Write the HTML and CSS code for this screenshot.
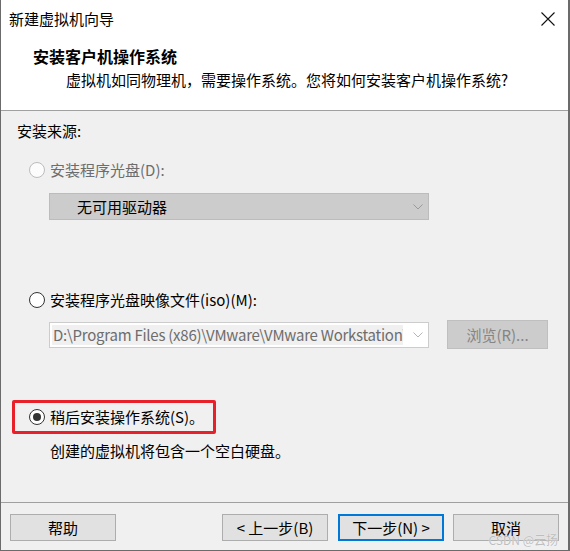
FILE: index.html
```html
<!DOCTYPE html>
<html lang="zh-CN">
<head>
<meta charset="utf-8">
<title>新建虚拟机向导</title>
<link rel="stylesheet" href="styles.css">
</head>
<body>
<div class="window">
  <div class="header">
    <div class="titlebar">
      <span class="title">新建虚拟机向导</span>
      <svg class="close" width="14" height="14" viewBox="0 0 14 14"><path d="M0.5 0.5 L13.5 13.5 M13.5 0.5 L0.5 13.5" stroke="#111" stroke-width="1.1" fill="none"/></svg>
    </div>
    <div class="heading">安装客户机操作系统</div>
    <div class="subtitle">虚拟机如同物理机，需要操作系统。您将如何安装客户机操作系统?</div>
  </div>
  <div class="body">
    <div class="group-label">安装来源:</div>
    <div class="radio-row disabled">
      <span class="radio radio-disabled"></span>
      <span>安装程序光盘(D):</span>
    </div>
    <div class="combo combo-drive">
      <span class="combo-text">无可用驱动器</span>
      <svg class="chev" width="10" height="6" viewBox="0 0 10 6"><path d="M0.5 0.5 L5 5 L9.5 0.5" stroke="#9a9a9a" fill="none"/></svg>
    </div>
    <div class="radio-row row-iso">
      <span class="radio"></span>
      <span>安装程序光盘映像文件(iso)(M):</span>
    </div>
    <div class="iso-row">
      <div class="combo combo-iso">
        <span class="edit">D:\Program Files (x86)\VMware\VMware Workstation\</span>
        <svg class="chev" width="10" height="6" viewBox="0 0 10 6"><path d="M0.5 0.5 L5 5 L9.5 0.5" stroke="#b5b5b5" fill="none"/></svg>
      </div>
      <div class="browse">浏览(R)...</div>
    </div>
    <div class="highlight">
      <div class="radio-row">
        <span class="radio checked"><span class="dot"></span></span>
        <span>稍后安装操作系统(S)。</span>
      </div>
    </div>
    <div class="note">创建的虚拟机将包含一个空白硬盘。</div>
  </div>
  <div class="footer">
    <div class="btn">帮助</div>
    <div class="spacer"></div>
    <div class="btn">&lt; 上一步(B)</div>
    <div class="btn btn-default">下一步(N) &gt;</div>
    <div class="btn btn-cancel">取消</div>
  </div>
  <div class="watermark">CSDN @云扬</div>
</div>
</body>
</html>
```

FILE: styles.css
```css
* { box-sizing: border-box; }
html, body { margin: 0; padding: 0; background: #ffffff; }
body {
  font-family: "Noto Sans CJK SC", "Noto Sans", sans-serif;
  font-size: 15px;
  color: #000;
}
.window {
  position: relative;
  width: 570px;
  height: 551px;
  border-left: 1px solid #6b6b6b;
  border-right: 2px solid #6b6b6b;
  border-bottom: 1px solid #6b6b6b;
  display: flex;
  flex-direction: column;
  overflow: hidden;
}
.header {
  height: 111px;
  background: #ffffff;
  border-bottom: 1px solid #a0a0a0;
  flex: none;
}
.titlebar {
  height: 38px;
  display: flex;
  align-items: center;
  justify-content: space-between;
  padding-left: 8px;
  padding-right: 13px;
}
.title { line-height: 20px; }
.close { display: block; }
.heading {
  margin-top: 8px;
  padding-left: 32px;
  font-weight: bold;
  font-size: 16px;
  line-height: 20px;
}
.subtitle {
  margin-top: 4px;
  padding-left: 65px;
  line-height: 20px;
}
.body {
  flex: 1;
  background: #f0f0f0;
  padding-top: 10px;
  padding-left: 16px;
  display: flex;
  flex-direction: column;
  align-items: flex-start;
}
.group-label { line-height: 20px; height: 20px; }
.radio-row {
  display: flex;
  align-items: center;
  gap: 5px;
  height: 20px;
  line-height: 20px;
  margin-left: 12px;
  margin-top: 19px;
}
.radio-row.disabled { color: #6d6d6d; }
.radio {
  width: 16px;
  height: 16px;
  border-radius: 50%;
  border: 1px solid #333333;
  background: #ffffff;
  display: flex;
  align-items: center;
  justify-content: center;
  flex: none;
}
.radio-disabled { border-color: #bcbcbc; background: #fcfcfc; }
.radio.checked .dot {
  width: 8px;
  height: 8px;
  border-radius: 50%;
  background: #333333;
}
.combo {
  display: flex;
  align-items: center;
  justify-content: space-between;
  border: 1px solid #bcbcbc;
}
.combo-drive {
  margin-left: 32px;
  margin-top: 13px;
  width: 380px;
  height: 27px;
  background: #cccccc;
  padding-left: 27px;
  padding-right: 5px;
}
.combo-text { line-height: 20px; }
.row-iso { margin-top: 70px; }
.iso-row {
  margin-left: 32px;
  margin-top: 10px;
  display: flex;
  align-items: center;
  gap: 18px;
  height: 29px;
}
.combo-iso {
  width: 380px;
  height: 26px;
  background: #ffffff;
  border-color: #cccccc;
  padding: 2px 5px 2px 2px;
}
.edit {
  flex: 1;
  height: 20px;
  line-height: 20px;
  background: #f0f0f0;
  color: #6d6d6d;
  white-space: nowrap;
  overflow: hidden;
  padding-left: 1px;
  margin-right: 10px;
  letter-spacing: -0.25px;
}
.browse {
  width: 101px;
  height: 29px;
  background: #cccccc;
  border: 1px solid #bfbfbf;
  color: #858585;
  display: flex;
  align-items: center;
  justify-content: center;
}
.highlight {
  margin-left: -5px;
  margin-top: 51px;
  width: 204px;
  height: 34px;
  border: 3px solid #e8202a;
  border-radius: 2px;
  display: flex;
  align-items: center;
}
.highlight .radio-row { margin-top: 0; margin-left: 14px; }
.note {
  margin-left: 33px;
  margin-top: 7px;
  line-height: 20px;
}
.footer {
  height: 48px;
  flex: none;
  background: #f0f0f0;
  border-top: 1px solid #a0a0a0;
  display: flex;
  align-items: flex-start;
  padding: 11px 9px 0 9px;
  gap: 10px;
}
.spacer { flex: 1; }
.btn {
  width: 106px;
  height: 27px;
  background: #e1e1e1;
  border: 1px solid #adadad;
  display: flex;
  align-items: center;
  justify-content: center;
  line-height: 20px;
}
.btn-default { border: 2px solid #0078d7; }
.btn-cancel { margin-left: -1px; }
.watermark {
  position: absolute;
  right: 10px;
  bottom: 3px;
  font-size: 12px;
  line-height: 14px;
  color: #bdbdbd;
  text-shadow: 0 0 1px #ffffff;
}
```
